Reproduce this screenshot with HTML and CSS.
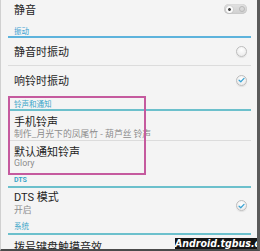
FILE: index.html
```html
<!DOCTYPE html>
<html lang="zh-CN">
<head>
<meta charset="utf-8">
<link rel="stylesheet" href="styles.css">
</head>
<body>
<div class="screen">
  <div class="list">
    <div class="row r-mute">
      <span class="title">静音</span>
      <span class="toggle"><span class="knob"></span><span class="ghost"></span></span>
    </div>
    <div class="header h-vib">振动</div>
    <div class="row r-single r-divided">
      <span class="title">静音时振动</span>
      <span class="check"></span>
    </div>
    <div class="row r-single r-last">
      <span class="title">响铃时振动</span>
      <span class="check on"><svg viewBox="0 0 10 10" width="10" height="10"><path d="M2.3 5.2 L4.2 7 L7.8 3.2" fill="none" stroke="#3aa3d4" stroke-width="1.4" stroke-linecap="round" stroke-linejoin="round"/></svg></span>
    </div>
    <div class="header h-ring">铃声和通知</div>
    <div class="row r-double r-phone r-divided">
      <div class="texts">
        <div class="title">手机铃声</div>
        <div class="sub">制作_月光下的凤尾竹 - 葫芦丝 铃声</div>
      </div>
    </div>
    <div class="row r-double r-notify">
      <div class="texts">
        <div class="title">默认通知铃声</div>
        <div class="sub">Glory</div>
      </div>
    </div>
    <div class="header h-dts">DTS</div>
    <div class="row r-double r-dts">
      <div class="texts">
        <div class="title">DTS 模式</div>
        <div class="sub">开启</div>
      </div>
      <span class="check on"><svg viewBox="0 0 10 10" width="10" height="10"><path d="M2.3 5.2 L4.2 7 L7.8 3.2" fill="none" stroke="#3aa3d4" stroke-width="1.4" stroke-linecap="round" stroke-linejoin="round"/></svg></span>
    </div>
    <div class="header h-sys">系统</div>
    <div class="row r-dial">
      <span class="title">拨号键盘触摸音效</span>
    </div>
  </div>
  <div class="highlight"></div>
  <div class="watermark">Android.tgbus.com</div>
</div>
</body>
</html>
```

FILE: styles.css
```css
html, body {
  margin: 0;
  padding: 0;
  background: #f4f4f4;
}

.screen {
  position: relative;
  width: 256px;
  height: 249px;
  overflow: hidden;
  background: #f4f4f4;
  border-left: 1px solid #d0d0d0;
  border-right: 3px solid #5a5a5a;
  border-bottom: 2px solid #4a4a4a;
  font-family: "Noto Sans CJK SC", "Noto Sans", sans-serif;
}

.list {
  margin-left: 7px;
  width: 243px;
  display: flex;
  flex-direction: column;
}

.row {
  display: flex;
  align-items: center;
  justify-content: space-between;
  padding: 0 4px 0 6px;
  box-sizing: border-box;
}

.title {
  font-size: 11px;
  line-height: 13px;
  color: #1e1e1e;
}

.sub {
  font-size: 8.8px;
  line-height: 11px;
  color: #8c8c8c;
  white-space: nowrap;
}

.r-mute {
  height: 19px;
}

.r-single {
  height: 28px;
}

.r-divided {
  border-bottom: 1px solid #dcdcdc;
}

.r-phone {
  height: 30px;
  align-items: flex-start;
  padding-top: 4px;
}

.r-notify {
  height: 34px;
  align-items: flex-start;
  padding-top: 4px;
}

.r-notify .sub {
  font-family: Roboto, "Noto Sans", sans-serif;
}

.r-dts {
  height: 32px;
  padding-top: 3px;
}

.r-dts .texts {
  align-self: flex-start;
}

.r-dts .title {
  font-family: Roboto, "Noto Sans CJK SC", sans-serif;
}

.r-dts .sub {
  line-height: 12px;
}

.r-dial {
  padding-top: 5px;
}

.header {
  font-size: 7.5px;
  line-height: 11px;
  color: #3aa5c8;
  padding-left: 6px;
  border-bottom: 2px solid #6cc0cc;
  font-family: "Noto Sans CJK SC", Roboto, sans-serif;
}

.h-vib {
  padding-top: 6px;
  border-bottom-color: #5db3dc;
  color: #3a9fd2;
}

.h-ring {
  padding-top: 4px;
}

.h-dts {
  padding-top: 0;
  font-family: Roboto, sans-serif;
  font-weight: bold;
  font-size: 7px;
}

.h-sys {
  padding-bottom: 2px;
}

.toggle {
  position: relative;
  width: 23px;
  height: 10px;
  border-radius: 5px;
  background: linear-gradient(#e2e2e2, #cfcfcf);
  box-shadow: inset 0 0 1px rgba(0, 0, 0, 0.25);
  display: flex;
  align-items: center;
  justify-content: space-between;
  padding: 0 2px;
  box-sizing: border-box;
  margin-top: -1px;
}

.knob {
  width: 7px;
  height: 7px;
  border-radius: 50%;
  background: radial-gradient(circle, #444 0 1.2px, #fafafa 1.6px);
  box-shadow: 0 0 1px rgba(0, 0, 0, 0.4);
}

.ghost {
  width: 6px;
  height: 6px;
  border-radius: 50%;
  border: 1px solid #b8b8b8;
  box-sizing: border-box;
}

.check {
  width: 11px;
  height: 11px;
  border-radius: 50%;
  border: 1px solid #bdbdbd;
  background: radial-gradient(circle at 50% 35%, #ffffff, #e6e6e6);
  box-sizing: border-box;
  display: flex;
  align-items: center;
  justify-content: center;
  box-shadow: 0 1px 1px rgba(0, 0, 0, 0.08);
}

.check svg {
  display: block;
}

.highlight {
  position: absolute;
  left: 7px;
  top: 96px;
  width: 138px;
  height: 79px;
  border: 2px solid #c55a9e;
  box-sizing: border-box;
  pointer-events: none;
}

.watermark {
  position: absolute;
  left: 174px;
  top: 238px;
  width: 82px;
  height: 11px;
  background: #141414;
  color: #ffffff;
  font-family: "Liberation Sans Narrow", "DejaVu Sans Condensed", sans-serif;
  font-weight: bold;
  font-style: italic;
  font-size: 10.5px;
  line-height: 11px;
  text-align: center;
  white-space: nowrap;
  overflow: hidden;
}
```
